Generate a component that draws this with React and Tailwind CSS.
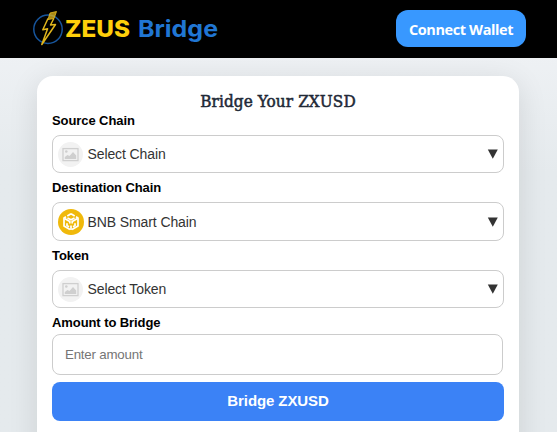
import { useState } from 'react'

const Logo = () => (
  <svg className="w-[186px] h-[40px]" viewBox="0 0 186 40" role="img" aria-label="ZEUS Bridge">
    <circle cx="15" cy="19.3" r="14.2" fill="none" stroke="#17559c" strokeWidth="1.5" />
    <path
      d="M17 3 L23.5 1.5 L21 8.5 L15 9.5 Z"
      fill="#e0b51c"
      fillOpacity="0.75"
      stroke="#e8bd20"
      strokeWidth="0.8"
    />
    <path
      d="M15 8.5 L9.8 19.8 L14.6 18.8 L8.8 34.5 L22.5 14.5 L17.5 15 L20.8 8.5"
      fill="none"
      stroke="#e0b51c"
      strokeWidth="1.5"
      strokeLinejoin="round"
    />
    <text x="32" y="27" textLength="65" lengthAdjust="spacingAndGlyphs" className="font-['Inter',sans-serif] font-extrabold text-[23px]" fill="#ffcf0a">
      ZEUS
    </text>
    <text x="105" y="27" textLength="80" lengthAdjust="spacingAndGlyphs" className="font-['Inter',sans-serif] font-bold text-[23px]" fill="#2076d3">
      Bridge
    </text>
  </svg>
)

const PlaceholderIcon = () => (
  <svg className="w-[25px] h-[25px] mr-px shrink-0" viewBox="0 0 25 25">
    <circle cx="12.5" cy="12.5" r="12.5" fill="#f2f2f2" />
    <rect x="5" y="6.6" width="15" height="12" fill="none" stroke="#cfcfcf" strokeWidth="1.3" />
    <circle cx="8.3" cy="9.5" r="1.3" fill="#cfcfcf" />
    <path d="M6.8 17 V15 L9.5 13 L11.5 14 L15 10 L18.2 13.5 V17 Z" fill="#cfcfcf" />
  </svg>
)

const BnbIcon = () => (
  <svg className="w-[26px] h-[26px] shrink-0" viewBox="0 0 26 26">
    <circle cx="13" cy="13" r="13" fill="#f0b90b" />
    <g fill="none" stroke="#fff" strokeWidth="1.7" strokeLinejoin="round">
      <path d="M13 4.8 L9.3 7 M13 4.8 L16.7 7 M8 7.8 L6 9 V17 L12 20.6 M18 7.8 L20 9 V17 L14 20.6" />
      <path d="M6.5 9.5 L11.8 12.5 V14.5 M19.5 9.5 L14.2 12.5 V14.5" />
      <path d="M9.5 9 L13 10.8 L16.5 9 M9 14.2 V16.6 L11 17.8 M17 14.2 V16.6 L15 17.8 M13 16.5 V21" />
    </g>
  </svg>
)

const SelectBox = ({ label, value, icon, className }) => (
  <div>
    <div className="h-[15px] text-[13px] leading-[15px] tracking-[-0.08px] font-bold text-black whitespace-nowrap">{label}</div>
    <button
      type="button"
      className={`flex items-center w-full pl-[4.5px] pr-[5px] border border-[#cccccc] rounded-lg bg-white ${className}`}
    >
      {icon}
      <span className="ml-[4px] text-[14px] leading-4 tracking-[-0.1px] text-[#333333]">{value}</span>
      <svg className="ml-auto w-[11px] h-[10px]" viewBox="0 0 11 10">
        <path d="M0.8 0.5 H10.8 L5.8 9.8 Z" fill="#333333" />
      </svg>
    </button>
  </div>
)

export default function App() {
  const [amount, setAmount] = useState('')

  return (
    <div className="h-screen overflow-hidden flex flex-col bg-linear-to-b from-[#f2f4f7] to-[#e5eaed] to-40% font-['Liberation_Sans',Arial,sans-serif]">
      {/* Header */}
      <header className="h-[58px] shrink-0 flex items-start justify-between bg-black pl-[33px] pr-[31px] pt-[10px]">
        <Logo />
        <button
          type="button"
          className="w-[130px] h-[37px] rounded-xl bg-[#3898ff] pt-[2px] text-white font-bold text-[14.5px] tracking-[-0.4px] font-['Open_Sans',sans-serif] whitespace-nowrap"
        >
          Connect Wallet
        </button>
      </header>

      {/* Bridge form */}
      <main className="mt-[18px] ml-[37px] w-[482px] h-[420px] shrink-0 rounded-2xl bg-white px-[15px] pt-[14px] shadow-[0_6px_30px_rgba(0,0,0,0.11)]">
        <h2 className="h-[23px] text-center text-[17px] leading-[23px] font-normal tracking-[0.1px] [-webkit-text-stroke:0.5px_#1f2937] text-[#1f2937] font-['DejaVu_Serif_Condensed','DejaVu_Serif',serif]">
          Bridge Your ZXUSD
        </h2>

        <div className="flex flex-col w-[452px]">
          <SelectBox label="Source Chain" value="Select Chain" icon={<PlaceholderIcon />} className="mt-[7px] h-[38px]" />
          <div className="mt-[7px]">
            <SelectBox label="Destination Chain" value="BNB Smart Chain" icon={<BnbIcon />} className="mt-[7px] h-[39px]" />
          </div>
          <div className="mt-[7px]">
            <SelectBox label="Token" value="Select Token" icon={<PlaceholderIcon />} className="mt-[7px] h-[38px]" />
          </div>

          <label htmlFor="amount" className="mt-[7px] h-[15px] text-[13px] leading-[15px] tracking-[-0.08px] font-bold text-black">
            Amount to Bridge
          </label>
          <input
            id="amount"
            type="text"
            placeholder="Enter amount"
            value={amount}
            onChange={(e) => setAmount(e.target.value)}
            className="mt-[4px] w-[451px] h-[41px] px-3 border border-[#cccccc] rounded-lg text-[13.3px] tracking-[-0.2px] placeholder:text-[#757575]"
          />
          <button
            type="button"
            className="mt-[7px] h-[39px] rounded-lg bg-[#3b82f6] text-white text-[15px] tracking-[-0.1px] font-bold"
          >
            Bridge ZXUSD
          </button>
        </div>
      </main>
    </div>
  )
}
